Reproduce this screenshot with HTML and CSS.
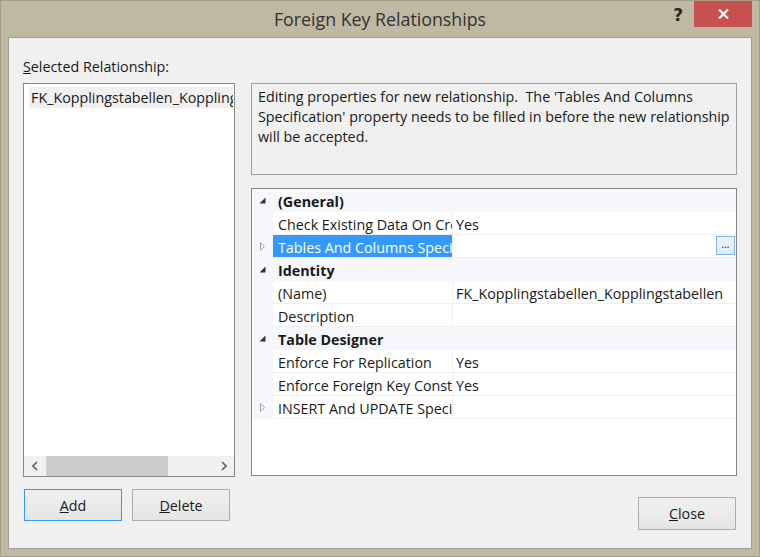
FILE: index.html
```html
<!DOCTYPE html>
<html>
<head>
<meta charset="utf-8">
<link rel="stylesheet" href="styles.css">
</head>
<body>
<div class="window">
  <div class="titlebar">
    <div></div>
    <div class="title">Foreign Key Relationships</div>
    <div class="controls">
      <span class="help">?</span>
      <span class="close-x">
        <svg width="11" height="10" viewBox="0 0 11 10"><path d="M1 0.5 L10 9.5 M10 0.5 L1 9.5" stroke="#fff" stroke-width="2.2"/></svg>
      </span>
    </div>
  </div>
  <div class="client">
    <div class="leftcol">
      <div class="label"><u>S</u>elected Relationship:</div>
      <div class="listbox">
        <div class="items">
          <div class="item">FK_Kopplingstabellen_Kopplingstabellen</div>
        </div>
        <div class="hscroll">
          <span class="arrow"><svg width="6" height="10" viewBox="0 0 6 10"><path d="M5 1 L1 5 L5 9" fill="none" stroke="#606060" stroke-width="1.6"/></svg></span>
          <div class="track"><div class="thumb"></div></div>
          <span class="arrow"><svg width="6" height="10" viewBox="0 0 6 10"><path d="M1 1 L5 5 L1 9" fill="none" stroke="#606060" stroke-width="1.6"/></svg></span>
        </div>
      </div>
      <div class="btnrow">
        <button class="btn default"><u>A</u>dd</button>
        <button class="btn"><u>D</u>elete</button>
      </div>
    </div>
    <div class="rightcol">
      <div class="desc">Editing properties for new relationship.&nbsp; The 'Tables And Columns<br>Specification' property needs to be filled in before the new relationship<br>will be accepted.</div>
      <div class="grid">
        <div class="row cat">
          <span class="gut"><svg width="7" height="7" viewBox="0 0 7 7"><path d="M6.5 0.5 L6.5 6.5 L0.5 6.5 Z" fill="#333"/></svg></span>
          <span class="catname">(General)</span>
        </div>
        <div class="row">
          <span class="gut"></span>
          <span class="name">Check Existing Data On Creation Or Re-Enabling</span>
          <span class="val">Yes</span>
        </div>
        <div class="row">
          <span class="gut"><svg width="6" height="9" viewBox="0 0 6 9"><path d="M0.5 0.5 L4.5 4.5 L0.5 8.5 Z" fill="none" stroke="#a6a6a6"/></svg></span>
          <span class="name sel">Tables And Columns Specification</span>
          <span class="val"><span class="ell">...</span></span>
        </div>
        <div class="row cat">
          <span class="gut"><svg width="7" height="7" viewBox="0 0 7 7"><path d="M6.5 0.5 L6.5 6.5 L0.5 6.5 Z" fill="#333"/></svg></span>
          <span class="catname">Identity</span>
        </div>
        <div class="row">
          <span class="gut"></span>
          <span class="name">(Name)</span>
          <span class="val">FK_Kopplingstabellen_Kopplingstabellen</span>
        </div>
        <div class="row">
          <span class="gut"></span>
          <span class="name">Description</span>
          <span class="val"></span>
        </div>
        <div class="row cat">
          <span class="gut"><svg width="7" height="7" viewBox="0 0 7 7"><path d="M6.5 0.5 L6.5 6.5 L0.5 6.5 Z" fill="#333"/></svg></span>
          <span class="catname">Table Designer</span>
        </div>
        <div class="row">
          <span class="gut"></span>
          <span class="name">Enforce For Replication</span>
          <span class="val">Yes</span>
        </div>
        <div class="row">
          <span class="gut"></span>
          <span class="name">Enforce Foreign Key Constraint</span>
          <span class="val">Yes</span>
        </div>
        <div class="row">
          <span class="gut"><svg width="6" height="9" viewBox="0 0 6 9"><path d="M0.5 0.5 L4.5 4.5 L0.5 8.5 Z" fill="none" stroke="#a6a6a6"/></svg></span>
          <span class="name">INSERT And UPDATE Specification</span>
          <span class="val"></span>
        </div>
      </div>
      <button class="btn closebtn"><u>C</u>lose</button>
    </div>
  </div>
</div>
</body>
</html>
```
FILE: styles.css
```css
* { box-sizing: border-box; }
html, body { margin: 0; padding: 0; }
body {
  width: 760px;
  height: 557px;
  overflow: hidden;
  font-family: "Segoe UI", "Open Sans", sans-serif;
  font-size: 14.3px;
  color: #1a1a1a;
}
.window {
  width: 760px;
  height: 557px;
  background: #bfb8a3;
  border: 1px solid #a49d88;
  padding: 0 7px 7px 7px;
  display: flex;
  flex-direction: column;
}
.titlebar {
  height: 36px;
  display: grid;
  grid-template-columns: 1fr auto 1fr;
  align-items: start;
}
.title {
  font-size: 17.8px;
  color: #333;
  line-height: 22px;
  padding-top: 7px;
}
.controls {
  display: flex;
  justify-content: flex-end;
  align-items: flex-start;
}
.help {
  font-family: "DejaVu Sans", sans-serif;
  font-weight: bold;
  font-size: 17px;
  line-height: 20px;
  color: #262626;
  margin-top: 4px;
  margin-right: 11px;
}
.close-x {
  width: 58px;
  height: 26px;
  background: #c75050;
  display: flex;
  align-items: center;
  justify-content: center;
}
.client {
  height: 512px;
  background: #f0f0f0;
  border: 1px solid #a3a093;
  padding: 21px 14px 0 14px;
  display: grid;
  grid-template-columns: 212px 486px;
  column-gap: 16px;
  align-items: start;
}
.leftcol, .rightcol {
  display: flex;
  flex-direction: column;
}
.label {
  height: 16px;
  line-height: 16px;
  margin-bottom: 8px;
}
.listbox {
  height: 394px;
  border: 1px solid #828790;
  background: #fff;
  display: flex;
  flex-direction: column;
}
.items {
  flex: 1;
  padding: 3px 1px 0 5px;
  overflow: hidden;
}
.item {
  height: 21px;
  line-height: 21px;
  background: #f0f0f0;
  padding-left: 2px;
  white-space: nowrap;
  overflow: hidden;
}
.hscroll {
  height: 20px;
  display: flex;
  background: #f0f0f0;
}
.arrow {
  width: 21px;
  display: flex;
  align-items: center;
  justify-content: center;
}
.track {
  flex: 1;
  padding-left: 1px;
}
.thumb {
  width: 122px;
  height: 20px;
  background: #cdcdcd;
}
.btnrow {
  display: flex;
  gap: 10px;
  margin-top: 12px;
  padding-left: 1px;
}
.btn {
  width: 98px;
  height: 32px;
  border: 1px solid #adadad;
  background: linear-gradient(#f0f0f0, #e5e5e5);
  font-family: "Segoe UI", "Open Sans", sans-serif;
  font-size: 14.3px;
  color: #1a1a1a;
  padding: 0;
}
.btn.default { border-color: #3399ff; }
.rightcol { padding-top: 24px; }
.desc {
  height: 92px;
  border: 1px solid #a0a0a0;
  background: #f0f0f0;
  padding: 3px 6px;
  line-height: 20px;
  white-space: nowrap;
  overflow: hidden;
  margin-bottom: 13px;
}
.grid {
  height: 288px;
  border: 1px solid #828790;
  background: #fff;
  display: flex;
  flex-direction: column;
}
.row {
  height: 23px;
  display: flex;
  line-height: 21px;
}
.gut {
  width: 21px;
  flex: none;
  background: #f5f7fa;
  display: flex;
  align-items: center;
  justify-content: center;
}
.row.cat { background: #f5f7fa; }
.catname {
  font-weight: bold;
  padding: 2px 0 0 5px;
}
.name {
  width: 180px;
  flex: none;
  padding: 2px 0 0 5px;
  border-right: 1px solid #f0f0f0;
  border-bottom: 1px solid #f0f0f0;
  white-space: nowrap;
  overflow: hidden;
}
.name.sel {
  background: #3399ff;
  color: #fff;
}
.val {
  flex: 1;
  padding: 2px 0 0 3px;
  border-bottom: 1px solid #f0f0f0;
  white-space: nowrap;
  overflow: hidden;
}
.val:has(.ell) {
  display: flex;
  justify-content: flex-end;
  padding-top: 0;
}
.ell {
  width: 19px;
  height: 19px;
  margin: 1px 1px 0 0;
  border: 1px solid #7eb4ea;
  background: linear-gradient(#ecf4fc, #dcecfc);
  font-size: 10px;
  line-height: 14px;
  text-align: center;
}
.closebtn {
  margin-top: 21px;
  height: 33px;
  align-self: flex-end;
  margin-right: 1px;
}
```
